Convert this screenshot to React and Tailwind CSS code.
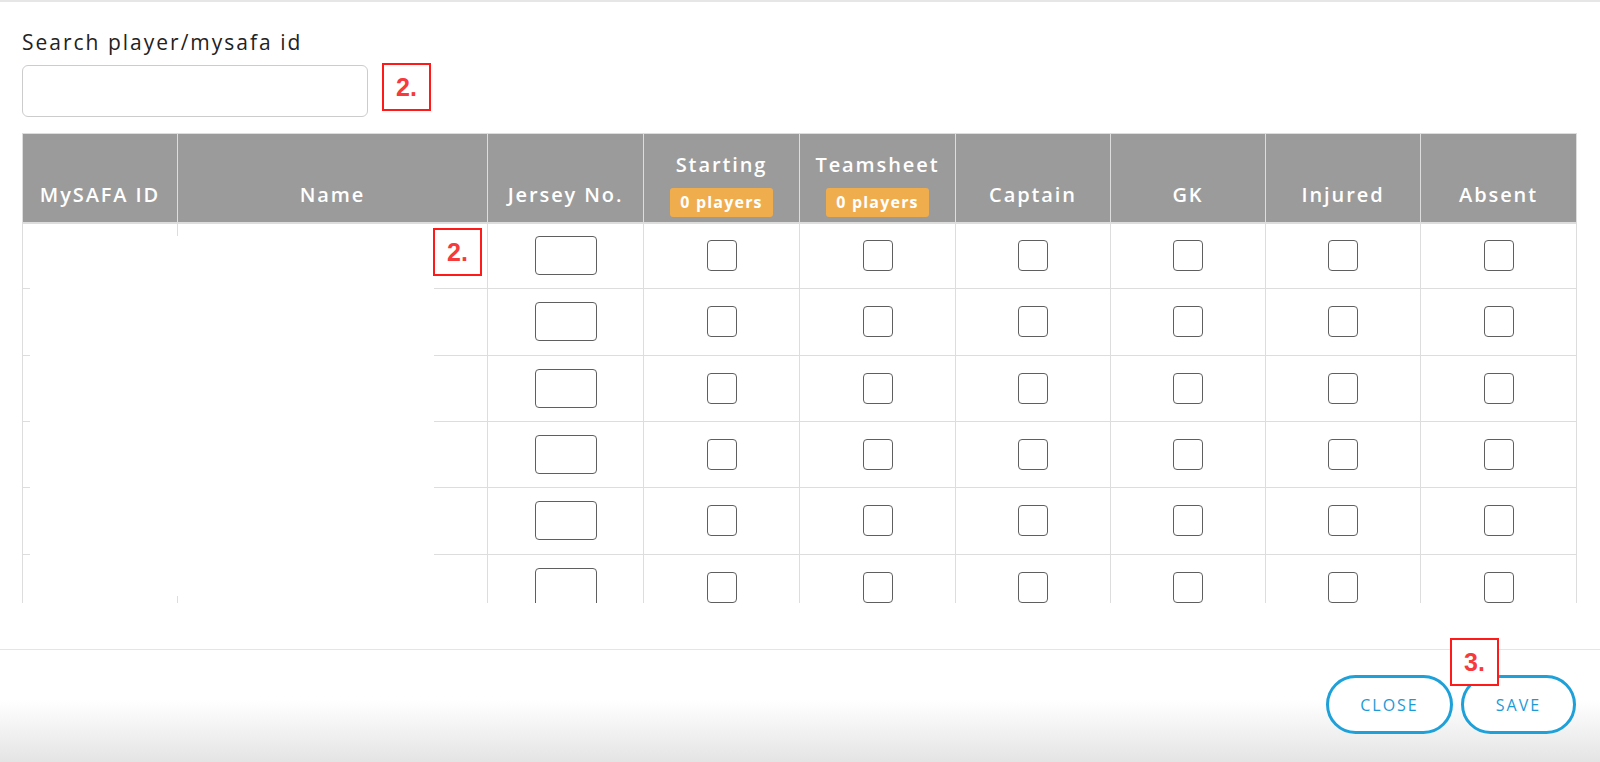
import React from "react";

const font = { fontFamily: "'Open Sans', 'Liberation Sans', sans-serif" };

const cols = [
  { key: "id", label: "MySAFA ID", w: "w-[155px]" },
  { key: "name", label: "Name", w: "w-[310px]" },
  { key: "jersey", label: "Jersey No.", w: "w-[156px]" },
  { key: "starting", label: "Starting", w: "w-[156px]", badge: "0 players" },
  { key: "teamsheet", label: "Teamsheet", w: "w-[156px]", badge: "0 players" },
  { key: "captain", label: "Captain", w: "w-[155px]" },
  { key: "gk", label: "GK", w: "w-[155px]" },
  { key: "injured", label: "Injured", w: "w-[155px]" },
  { key: "absent", label: "Absent", w: "w-[156px]" },
];

const rows = [1, 2, 3, 4, 5, 6];

function Marker({ n, className = "" }) {
  return (
    <div
      className={`flex items-center justify-center w-[49px] h-[48px] border-2 border-[#ff1a1a] bg-white text-[#f53b3b] text-[25px] font-bold leading-none ${className}`}
      style={{ fontFamily: "'Liberation Sans', Arial, sans-serif" }}
    >
      {n}.
    </div>
  );
}

function Box() {
  return <div className="mx-auto w-[30px] h-[31px] rounded-[4px] border border-[#5f5f5f] bg-white" />;
}

export default function App() {
  return (
    <div className="w-[1600px] h-[762px] bg-white overflow-hidden flex flex-col" style={font}>
      <div className="h-[3px] border-t-2 border-[#e6e6e6]" />

      {/* Search */}
      <div className="pl-[22px] pt-[25px]">
        <p className="text-[21px] leading-[28px] font-medium tracking-[2px] text-[#222]">Search player/mysafa id</p>
        <div className="flex items-start gap-[14px] mt-[9px]">
          <input className="w-[346px] h-[52px] rounded-[6px] border border-[#cccccc] outline-none px-3" />
          <Marker n={2} className="-mt-[2px]" />
        </div>
      </div>

      {/* Table */}
      <div className="relative ml-[22px] mt-[16px] w-[1555px] h-[470px] overflow-hidden">
        <table className="table-fixed border-collapse w-[1555px]">
          <colgroup>
            {cols.map(c => <col key={c.key} className={c.w} />)}
          </colgroup>
          <thead>
            <tr className="h-[89px] bg-[#9b9b9b]">
              {cols.map(c => (
                <th
                  key={c.key}
                  className={`border border-[#dddddd] border-b-2 align-bottom text-white text-[20px] font-semibold tracking-[1.9px] leading-[28px] ${c.badge ? "pb-[5px]" : "pb-[13px]"}`}
                >
                  <div>{c.label}</div>
                  {c.badge && (
                    <div className="mx-auto mt-[9px] w-[103px] h-[29px] rounded-[3px] bg-[#f0ad4e] text-[16px] leading-[29px] font-bold tracking-[1.2px]">
                      {c.badge}
                    </div>
                  )}
                </th>
              ))}
            </tr>
          </thead>
          <tbody>
            {rows.map(r => (
              <tr key={r} className="h-[66.33px]">
                {cols.map(c => (
                  <td key={c.key} className="border border-[#dddddd] text-center align-middle">
                    {c.key === "jersey" && (
                      <div className="mx-auto w-[62px] h-[39px] rounded-[4px] border border-[#5f5f5f] bg-white" />
                    )}
                    {!["id", "name", "jersey"].includes(c.key) && <Box />}
                  </td>
                ))}
              </tr>
            ))}
          </tbody>
        </table>

        {/* redacted names */}
        <div className="absolute left-[8px] top-[103px] w-[404px] h-[360px] bg-white" />
        <Marker n={2} className="absolute left-[411px] top-[95px]" />
      </div>

      {/* Footer */}
      <div className="relative mt-[46px] flex-1 border-t border-[#e5e5e5] bg-[linear-gradient(to_bottom,#ffffff_0px,#ffffff_50px,#e4e4e4_112px)] flex justify-end items-start pr-[24px] pt-[25px] gap-[8px]">
        {["CLOSE", "SAVE"].map((b, i) => (
          <button
            key={b}
            className={`h-[59px] ${i === 0 ? "w-[127px]" : "w-[115px]"} rounded-full border-[3px] border-[#1ea0d9] bg-white text-[#1c9ad6] text-[16px] tracking-[2px]`}
          >
            {b}
          </button>
        ))}
        <Marker n={3} className="absolute left-[1450px] -top-[12px] h-[47px]" />
      </div>
    </div>
  );
}
